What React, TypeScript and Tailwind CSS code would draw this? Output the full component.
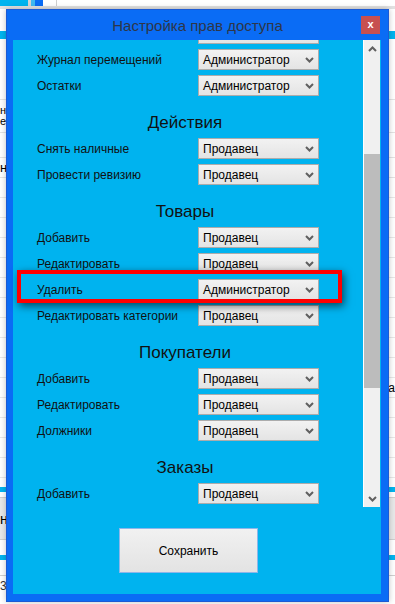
import React from 'react';

type Row = [string, string];

const groups: { title: string | null; rows: Row[] }[] = [
    { title: null, rows: [['', ''], ['Журнал перемещений', 'Администратор'], ['Остатки', 'Администратор']] },
    { title: 'Действия', rows: [['Снять наличные', 'Продавец'], ['Провести ревизию', 'Продавец']] },
    {
        title: 'Товары',
        rows: [
            ['Добавить', 'Продавец'],
            ['Редактировать', 'Продавец'],
            ['Удалить', 'Администратор'],
            ['Редактировать категории', 'Продавец'],
        ],
    },
    { title: 'Покупатели', rows: [['Добавить', 'Продавец'], ['Редактировать', 'Продавец'], ['Должники', 'Продавец']] },
    { title: 'Заказы', rows: [['Добавить', 'Продавец'], ['', '']] },
];

const Chevron = ({ up = false }: { up?: boolean }) => (
    <svg width="9" height="6" viewBox="0 0 9 6" className={up ? 'rotate-180' : ''}>
        <path d="M1 1 L4.5 4.5 L8 1" fill="none" stroke="#606060" strokeWidth="2" />
    </svg>
);

const Combo = ({ value }: { value: string }) => (
    <div className="w-[121px] h-[21px] border border-[#acacac] bg-gradient-to-b from-[#f2f2f2] to-[#e4e4e4] flex items-center justify-between pl-[4px] pr-[4px] text-[12px] text-black">
        <span>{value}</span>
        <Chevron />
    </div>
);

// rows of the app window that peek out around the dialog
const bgRows = Array.from({ length: 15 }, (_, i) => i);

export default function App() {
    return (
        <div className="relative w-[395px] h-[604px] overflow-hidden bg-white font-['Liberation_Sans',Arial,sans-serif]">
            {/* underlying window */}
            <div className="flex h-[6px]">
                <div className="w-[28px] bg-[#00b4ef]" />
                <div className="w-[3px] bg-[#d4d4d4]" />
                <div className="w-[4px] bg-[#3fb8f0]" />
                <div className="w-[8px] bg-[#0a6cf5]" />
                <div className="w-[13px] bg-white" />
                <div className="w-[1px] bg-[#cfcfcf]" />
                <div className="flex-1 bg-white" />
            </div>
            <div className="h-[3px] bg-[#e2e2e2]" />
            <div className="h-[22px]" />
            <div className="h-[8px] bg-[#00b4ef]" />
            <div className="h-[61px] border-b border-[#e3e3e3]" />
            <div className="h-[33px] border-b border-[#e3e3e3] pt-[5px] text-[11px] leading-[11px] text-black">
                <div>н</div>
                <div>е</div>
            </div>
            <div className="h-[25px] border-b border-[#e3e3e3]" />
            <div className="h-[20px] border-b border-[#e3e3e3] text-[13px] leading-[20px] text-black">нс</div>
            {bgRows.map((i) => (
                <div key={i} className="h-[20px] border-b border-[#e8e8e8] flex justify-end text-[12px] leading-[20px] text-black">
                    {i === 10 ? 'a' : ''}
                </div>
            ))}
            <div className="h-[9px]" />
            <div className="h-[5px] bg-[#00b4ef]" />
            <div className="mt-[5px] h-[43px] bg-[#e8e8e8] border-y border-[#cfcfcf] text-[14px] leading-[43px]">нн</div>
            <div className="mt-[15px] h-[5px] bg-[#00b4ef]" />
            <div className="mt-[15px] border-t border-[#d0d0d0] pt-[2px] text-[12px] leading-[16px] text-[#333]">33</div>

            {/* dialog */}
            <div className="absolute left-[6px] top-[9px] w-[383px] h-[593px] bg-[#0a6cf5] border border-[#1c5ad4] flex flex-col shadow-[0_0_6px_rgba(0,0,0,0.25)]">
                <div className="relative h-[30px] flex items-center justify-center">
                    <span className="text-[15px] text-[#2e3648] mt-[3px]">Настройка прав доступа</span>
                    <div className="absolute right-[8px] top-[6px] w-[19px] h-[18px] bg-[#c75050] flex items-center justify-center text-white text-[11px] font-bold leading-none pb-[2px]">
                        x
                    </div>
                </div>
                <div className="ml-[6px] mr-[7px] h-[554px] bg-[#00b3ef] flex flex-col">
                    <div className="h-[467px] flex">
                        <div className="w-[350px] overflow-hidden">
                            <div className="-mt-[17px]">
                                {groups.map((g, gi) => (
                                    <div key={gi}>
                                        {g.title && (
                                            <div className="h-[37px] pt-[13px] pr-[6px] text-center text-[17px] leading-[18px] text-[#111]">
                                                {g.title}
                                            </div>
                                        )}
                                        {g.rows.map(([label, value], ri) => (
                                            <div key={ri} className="h-[26px] flex items-start">
                                                <div className="w-[185px] h-[21px] pl-[24px] flex items-center text-[12px] text-[#111]">{label}</div>
                                                <Combo value={value} />
                                            </div>
                                        ))}
                                    </div>
                                ))}
                            </div>
                        </div>
                        <div className="w-[17px] bg-[#f0f0f0] border-l border-white flex flex-col">
                            <div className="h-[17px] flex items-center justify-center">
                                <Chevron up />
                            </div>
                            <div className="h-[97px]" />
                            <div className="h-[234px] bg-[#bcbcbc]" />
                            <div className="flex-1" />
                            <div className="h-[17px] flex items-center justify-center">
                                <Chevron />
                            </div>
                        </div>
                    </div>
                    <div className="pt-[21px]">
                        <button className="ml-[106px] w-[139px] h-[45px] border border-[#8db6ea] bg-gradient-to-b from-[#f1f1f1] to-[#e3e3e3] text-[12px] text-black">
                            Сохранить
                        </button>
                    </div>
                </div>
            </div>

            {/* highlight */}
            <div className="absolute left-[17px] top-[270px] w-[325px] h-[33px] border-4 border-[#f00] shadow-[2px_3px_8px_rgba(0,0,0,0.6)]" />
        </div>
    );
}
